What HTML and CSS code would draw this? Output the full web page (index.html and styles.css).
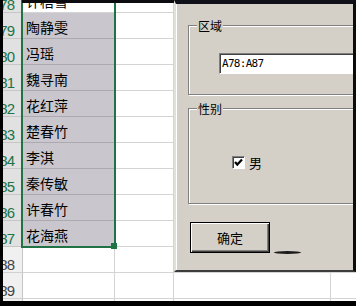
FILE: index.html
```html
<!DOCTYPE html>
<html lang="zh-CN">
<head>
  <meta charset="UTF-8">
  <meta name="viewport" content="width=device-width, initial-scale=1.0">
  <title>区域筛选</title>
  <link rel="stylesheet" href="styles.css">
</head>
<body>

  <div class="screen">

    <div class="sheet">
      <div class="rh on">78</div><div class="c a act">许梧雪</div><div class="c"></div><div class="c"></div><div class="c"></div>
      <div class="rh on">79</div><div class="c a on">陶静雯</div><div class="c"></div><div class="c"></div><div class="c"></div>
      <div class="rh on">80</div><div class="c a on">冯瑶</div><div class="c"></div><div class="c"></div><div class="c"></div>
      <div class="rh on">81</div><div class="c a on">魏寻南</div><div class="c"></div><div class="c"></div><div class="c"></div>
      <div class="rh on">82</div><div class="c a on">花红萍</div><div class="c"></div><div class="c"></div><div class="c"></div>
      <div class="rh on">83</div><div class="c a on">楚春竹</div><div class="c"></div><div class="c"></div><div class="c"></div>
      <div class="rh on">84</div><div class="c a on">李淇</div><div class="c"></div><div class="c"></div><div class="c"></div>
      <div class="rh on">85</div><div class="c a on">秦传敏</div><div class="c"></div><div class="c"></div><div class="c"></div>
      <div class="rh on">86</div><div class="c a on">许春竹</div><div class="c"></div><div class="c"></div><div class="c"></div>
      <div class="rh on">87</div><div class="c a on">花海燕</div><div class="c"></div><div class="c"></div><div class="c"></div>
      <div class="rh">88</div><div class="c a"></div><div class="c"></div><div class="c"></div><div class="c"></div>
      <div class="rh">89</div><div class="c a"></div><div class="c"></div><div class="c"></div><div class="c"></div>
      <div class="rh">90</div><div class="c a"></div><div class="c"></div><div class="c"></div><div class="c"></div>

      <!-- selected range A78:A87 -->
      <div class="sel"><span class="handle"></span></div>
    </div>

    <div class="topbar"></div>

    <div class="dialog">
      <fieldset class="group g-area">
        <legend>区域</legend>
        <input class="range" type="text" value="A78:A87" readonly>
      </fieldset>

      <fieldset class="group g-sex">
        <legend>性别</legend>
        <label class="check">
          <span class="box">
            <svg width="11" height="11" viewBox="0 0 11 11"><polyline points="2,5 4.3,7.6 9,2.6" fill="none" stroke="#000" stroke-width="2.2"/></svg>
          </span>
          男
        </label>
      </fieldset>

      <div class="actions">
        <button class="btn">确定</button>
        <span class="smudge"></span>
      </div>
    </div>

  </div>

</body>
</html>
```

FILE: styles.css
```css
body {
  margin: 0;
  background: #000;
  font-family: "Noto Sans CJK SC", sans-serif;
  overflow: hidden;
}
.screen {
  position: relative;
  margin-left: 3px;
  height: 301px;
  background: #fff;
  overflow: hidden;
}

/* worksheet */
.sheet {
  position: relative;
  display: grid;
  grid-template-columns: 20px 92px 59px 157px 60px;
  grid-template-rows: repeat(13, 26px);
  margin-top: -13px;
}
.rh {
  display: flex;
  justify-content: flex-end;
  align-items: flex-end;
  overflow: hidden;
  padding-right: 8px;
  background: #f0f0f0;
  border-right: 1px solid #c4c4c4;
  border-bottom: 1px solid #d0d0d0;
  font: 15px/1 "Liberation Sans", sans-serif;
  letter-spacing: -1px;
  color: #444;
}
.rh.on {
  background: #e1e1e1;
  color: #217346;
  border-bottom-color: #c6c6c6;
}
.c {
  border-right: 1px solid #d4d4d4;
  border-bottom: 1px solid #d4d4d4;
}
.a {
  display: flex;
  align-items: flex-end;
  padding: 0 0 4px 3px;
  font-size: 14px;
  line-height: 1;
  white-space: nowrap;
  color: #000;
}
.a.on {
  background: #c9c7cd;
  border-bottom-color: #acaab0;
}
.sel {
  position: absolute;
  grid-column: 2 / 3;
  grid-row: 1 / 11;
  top: -2px;
  left: -2px;
  right: -1px;
  bottom: -1px;
  border: 2px solid #217346;
}
.handle {
  position: absolute;
  right: -3px;
  bottom: -3px;
  width: 6px;
  height: 6px;
  background: #217346;
}
.topbar {
  position: absolute;
  top: 0;
  left: 19px;
  right: 0;
  height: 3px;
  background: #0b0b10;
}

/* dialog */
.dialog {
  position: absolute;
  top: 0;
  left: 171px;
  width: 182px;
  height: 272px;
  box-sizing: border-box;
  padding: 15px 0 0 12px;
  background: #d4d0c8;
  border-top: 4px solid #101018;
  border-right: 3px solid #0c0c0c;
  border-bottom: 2px solid #3c3c3c;
  border-left: 2px solid #e2e0da;
  box-shadow: inset 1px 0 #fff;
  overflow: hidden;
  font-size: 12px;
}
.group {
  margin: 0;
  width: 200px;
  min-inline-size: 0;
  border: 1px solid #808080;
  box-shadow: inset 1px 1px #fff, 1px 1px #fff;
}
.group legend {
  padding: 0 1px;
  font-size: 12px;
  line-height: 13px;
  background: #d4d0c8;
  color: #000;
}
.g-area {
  padding: 21px 0 20px 8px;
}
.g-sex {
  margin-top: 7px;
  padding: 41px 0 34px 8px;
}
.range {
  display: block;
  margin: 0 0 0 22px;
  width: 200px;
  height: 21px;
  box-sizing: border-box;
  padding: 0 0 0 2px;
  border: 1px solid;
  border-color: #808080 #fff #fff #808080;
  box-shadow: inset 1px 1px #404040;
  background: #fff;
  font: 11px "DejaVu Sans Mono", monospace;
  letter-spacing: -0.7px;
  color: #000;
  outline: none;
}
.check {
  display: flex;
  align-items: center;
  margin-left: 35px;
  height: 13px;
  font-size: 13px;
  line-height: 13px;
  color: #000;
}
.box {
  display: block;
  width: 13px;
  height: 13px;
  box-sizing: border-box;
  margin-right: 4px;
  border: 1px solid;
  border-color: #808080 #fff #fff #808080;
  box-shadow: inset 1px 1px #404040;
  background: #fff;
}
.box svg {
  display: block;
}
.actions {
  display: flex;
  align-items: flex-end;
  margin: 18px 0 0 2px;
}
.btn {
  width: 80px;
  height: 31px;
  padding: 0;
  border: 1px solid #000;
  background: #d4d0c8;
  box-shadow: inset 1px 1px #fff, inset -1px -1px #404040, inset -2px -2px #808080;
  font: 13px "Noto Sans CJK SC", sans-serif;
  color: #000;
}
.smudge {
  width: 27px;
  height: 3px;
  margin: 0 0 -1px 4px;
  background: #1b1b1b;
  border-radius: 50%;
}
```
